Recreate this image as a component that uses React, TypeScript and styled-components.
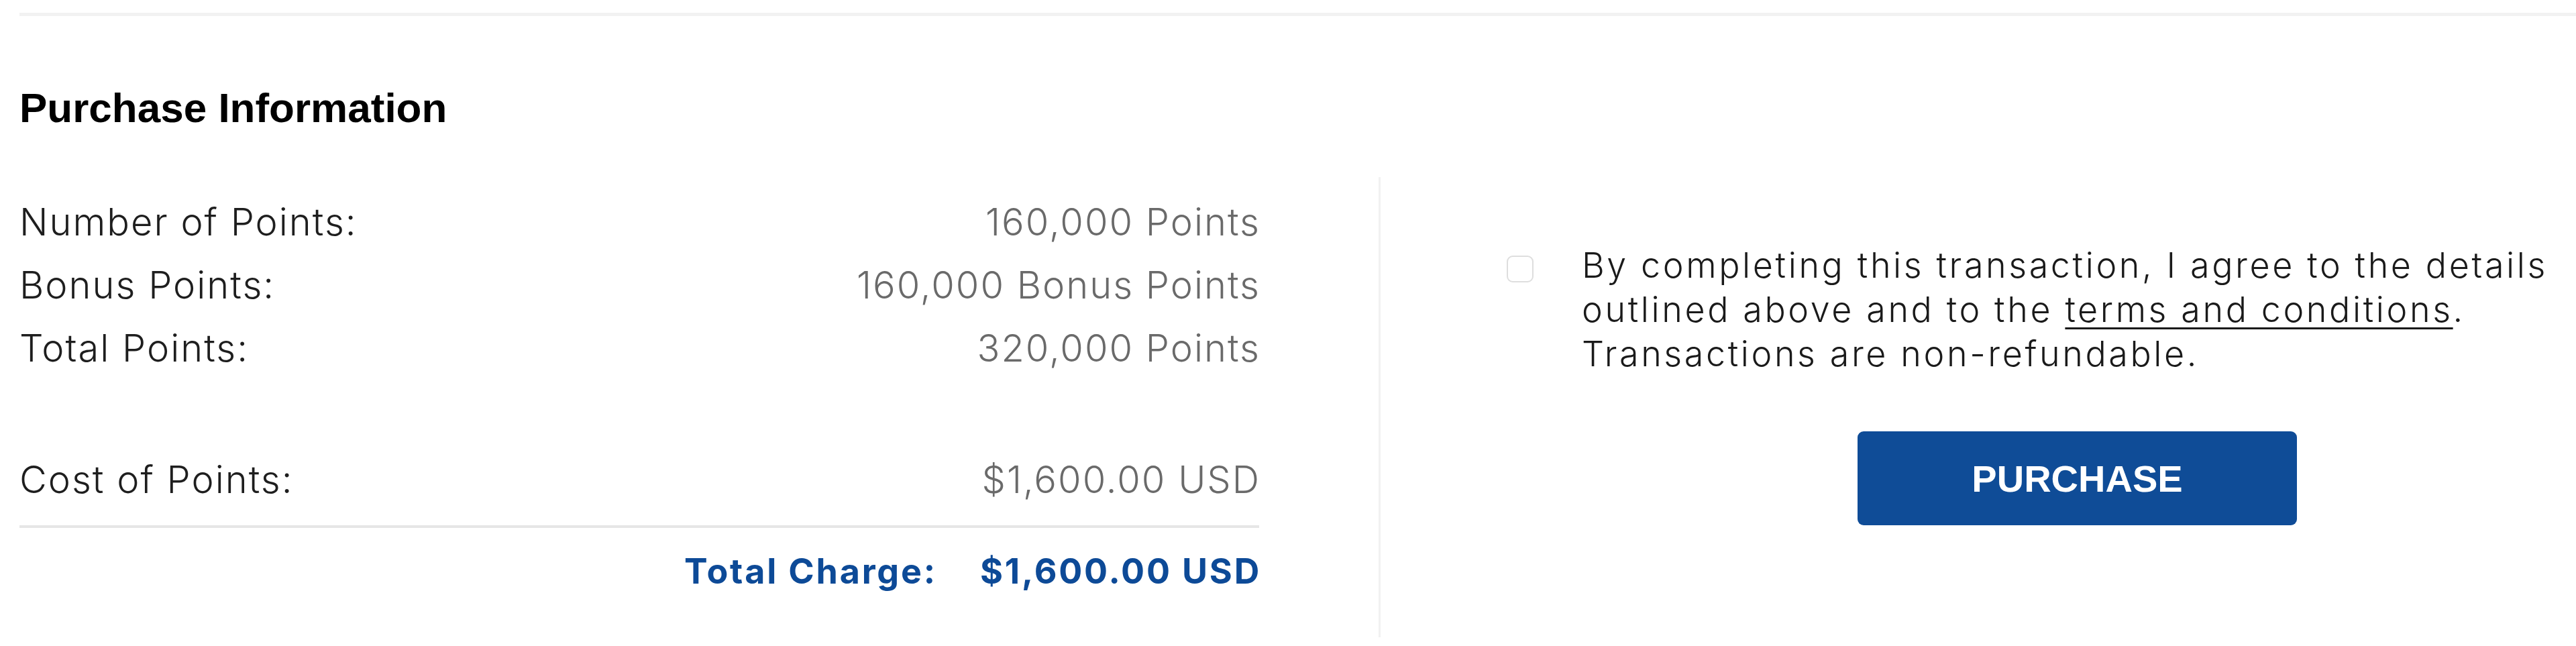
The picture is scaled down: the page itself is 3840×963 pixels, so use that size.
import styled, { createGlobalStyle } from "styled-components";

const pointRows = [
  { id: 1, label: "Number of Points:", value: "160,000 Points" },
  { id: 2, label: "Bonus Points:", value: "160,000 Bonus Points" },
  { id: 3, label: "Total Points:", value: "320,000 Points" },
];

const GlobalStyle = createGlobalStyle`
  html,
  body {
    margin: 0;
    padding: 0;
    background: #ffffff;
  }

  body {
    font-family: Inter, "Open Sans", "Liberation Sans", sans-serif;
    -webkit-font-smoothing: antialiased;
  }
`;

const Page = styled.div`
  width: 3840px;
  height: 963px;
  padding-top: 19px;
  box-sizing: border-box;
  overflow: hidden;
`;

const TopRule = styled.hr`
  height: 5px;
  margin: 0 0 0 29px;
  border: none;
  background-color: #f2f2f2;
`;

const Heading = styled.h2`
  margin: 106px 0 0 29px;
  font-family: "Liberation Sans", Arial, sans-serif;
  font-size: 62px;
  line-height: 62px;
  font-weight: 700;
  color: #000000;
`;

const Columns = styled.div`
  display: flex;
  margin-top: 72px;
  padding-left: 29px;
`;

const Summary = styled.div`
  width: 1848px;
  padding-top: 20px;
  margin-right: 178px;
`;

const Row = styled.div<{ $gap?: number }>`
  display: flex;
  justify-content: space-between;
  align-items: baseline;
  height: 94px;
  line-height: 94px;
  margin-top: ${(p) => p.$gap ?? 0}px;
  font-size: 56px;
  font-weight: 300;
  letter-spacing: 2px;
`;

const Label = styled.span`
  color: #1e1e1e;
`;

const Value = styled.span`
  margin-right: -2px;
  color: #6a6a6a;
`;

const Rule = styled.hr`
  height: 4px;
  margin: 21px 0 18px;
  border: none;
  background-color: #e6e6e6;
`;

const TotalRow = styled.div`
  display: flex;
  justify-content: flex-end;
  gap: 64px;
  height: 94px;
  line-height: 94px;
  margin-right: -3px;
  font-size: 52px;
  font-weight: 700;
  letter-spacing: 2.8px;
  color: #0d4a97;
`;

const Divider = styled.div`
  width: 3px;
  height: 686px;
  background-color: #f1f1f1;
`;

const Checkout = styled.div`
  display: flex;
  flex-direction: column;
  padding: 99px 0 0 188px;
`;

const Agreement = styled.label`
  display: flex;
  align-items: flex-start;
  gap: 72px;
  font-size: 52px;
  line-height: 66px;
  font-weight: 300;
  letter-spacing: 3.6px;
  color: #1a1a1a;
  white-space: nowrap;
`;

const Checkbox = styled.input.attrs({ type: "checkbox" })`
  appearance: none;
  flex: none;
  width: 40px;
  height: 40px;
  margin: 18px 0 0;
  border: 2px solid #dedede;
  border-radius: 9px;
  background: #ffffff;
  box-sizing: border-box;
`;

const TermsLink = styled.a`
  color: inherit;
  text-decoration: underline;
  text-decoration-thickness: 3px;
  text-underline-offset: 8px;
`;

const PurchaseButton = styled.button`
  width: 655px;
  height: 140px;
  margin: 82px 0 0 523px;
  border: none;
  border-radius: 9px;
  background-color: #0f4c97;
  color: #ffffff;
  font-family: "Liberation Sans", Arial, sans-serif;
  font-size: 56px;
  font-weight: 700;
  cursor: pointer;
`;

const App = () => {
  return (
    <>
      <GlobalStyle />
      <Page>
        <TopRule />
        <Heading>Purchase Information</Heading>

        <Columns>
          <Summary>
            {pointRows.map((row) => (
              <Row key={row.id}>
                <Label>{row.label}</Label>
                <Value>{row.value}</Value>
              </Row>
            ))}

            <Row $gap={102}>
              <Label>Cost of Points:</Label>
              <Value>$1,600.00 USD</Value>
            </Row>

            <Rule />

            <TotalRow>
              <span>Total Charge:</span>
              <span>$1,600.00 USD</span>
            </TotalRow>
          </Summary>

          <Divider />

          <Checkout>
            <Agreement>
              <Checkbox />
              <span>
                By completing this transaction, I agree to the details
                <br />
                outlined above and to the{" "}
                <TermsLink href="#">terms and conditions</TermsLink>.
                <br />
                Transactions are non-refundable.
              </span>
            </Agreement>

            <PurchaseButton type="button">PURCHASE</PurchaseButton>
          </Checkout>
        </Columns>
      </Page>
    </>
  );
};

export default App;
